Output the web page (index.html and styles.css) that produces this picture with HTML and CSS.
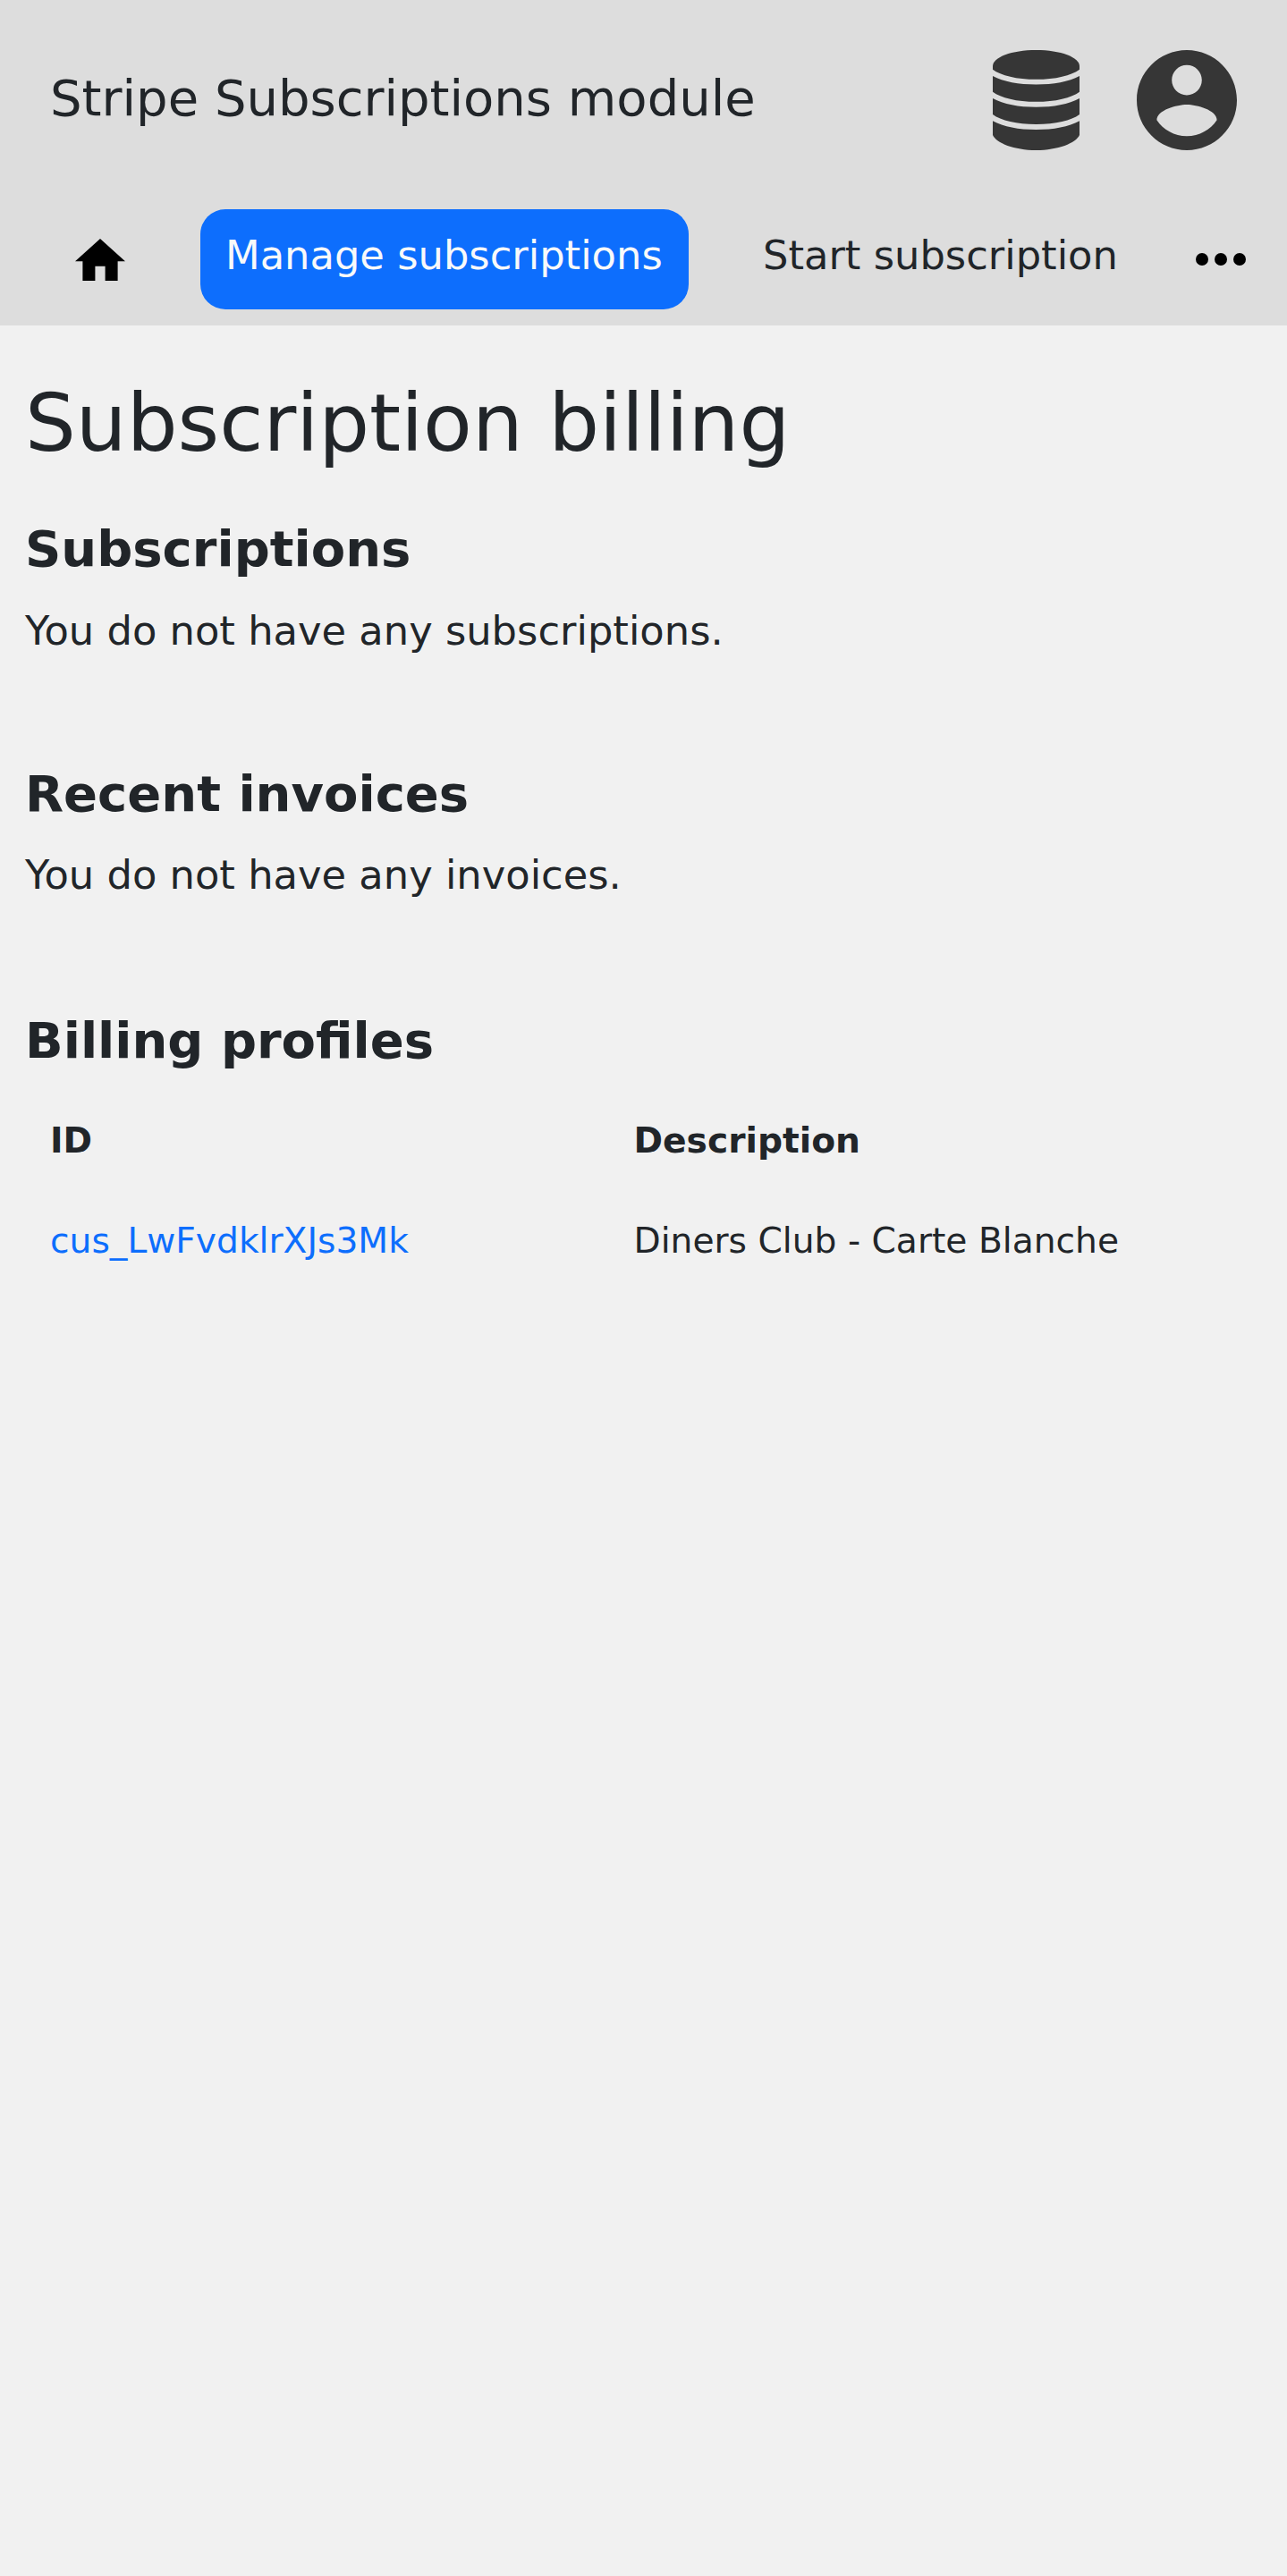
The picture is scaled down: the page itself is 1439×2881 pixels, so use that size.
FILE: index.html
```html
<!DOCTYPE html>
<html lang="en">
<head>
<meta charset="utf-8">
<title>Subscription billing</title>
<link rel="stylesheet" href="styles.css">
</head>
<body>
<header class="header">
  <div class="topbar">
    <div class="brand">Stripe Subscriptions module</div>
    <svg class="icon-database" viewBox="0 0 97 112" aria-hidden="true">
      <path d="M0 18C0 8 21 0 48.500 0S97 8 97 18V21.700C88 28.500 70 32.800 48.500 32.800S9 28.500 0 21.700Z"/>
      <path d="M0 29C12 35.500 29 38.500 48.500 38.500S85 35.500 97 29V46.700C88 53.500 70 57.800 48.500 57.800S9 53.500 0 46.700Z"/>
      <path d="M0 54C12 60.700 29 63.700 48.500 63.700S85 60.700 97 54V72C88 78.800 70 83 48.500 83S9 78.800 0 72Z"/>
      <path d="M0 79.300C12 86 29 89 48.500 89S85 86 97 79.300V95C93 104 73 112 48.500 112S4 104 0 95Z"/>
    </svg>
    <svg class="icon-account" viewBox="2 2 20 20" aria-hidden="true">
      <path d="M12 2C6.480 2 2 6.480 2 12s4.480 10 10 10 10-4.480 10-10S17.520 2 12 2zm0 3c1.660 0 3 1.340 3 3s-1.340 3-3 3-3-1.340-3-3 1.340-3 3-3zm0 14.200c-2.500 0-4.710-1.280-6-3.220.03-1.990 4-3.080 6-3.080 1.990 0 5.970 1.090 6 3.080-1.290 1.940-3.500 3.220-6 3.220z"/>
    </svg>
  </div>
  <nav class="nav">
    <svg class="icon-home" viewBox="2 3 20 17" aria-hidden="true"><path d="M10 20v-6h4v6h5v-8h3L12 3 2 12h3v8z"/></svg>
    <a class="nav-item nav-item-active">Manage subscriptions</a>
    <a class="nav-item">Start subscription</a>
    <svg class="icon-more" viewBox="0 0 16 4" aria-hidden="true"><circle cx="2" cy="2" r="2"/><circle cx="8" cy="2" r="2"/><circle cx="14" cy="2" r="2"/></svg>
  </nav>
</header>
<main class="content">
  <h1 class="page-title">Subscription billing</h1>
  <section class="section">
    <h2 class="section-title">Subscriptions</h2>
    <p class="section-text">You do not have any subscriptions.</p>
  </section>
  <section class="section section-invoices">
    <h2 class="section-title">Recent invoices</h2>
    <p class="section-text">You do not have any invoices.</p>
  </section>
  <section class="section">
    <h2 class="section-title section-title-table">Billing profiles</h2>
    <table class="profiles">
      <thead><tr><th>ID</th><th>Description</th></tr></thead>
      <tbody><tr><td><a class="link">cus_LwFvdklrXJs3Mk</a></td><td>Diners Club - Carte Blanche</td></tr></tbody>
    </table>
  </section>
</main>
</body>
</html>
```
FILE: styles.css
```css
* { box-sizing: border-box; }
body {
  margin: 0;
  min-height: 2881px;
  background: #f1f1f1;
  color: #212529;
  font-family: "DejaVu Sans", sans-serif;
}
.header {
  width: 1438.5px;
  height: 364px;
  background: #ddd;
}
.topbar {
  display: flex;
  align-items: center;
  height: 224px;
  padding: 0 56px;
  fill: #363636;
}
.brand {
  flex: 1;
  font-size: 56px;
  line-height: 112px;
  padding-bottom: 4px;
}
.icon-database { width: 97px; height: 112px; margin-right: 63.700px; }
.icon-account { width: 112px; height: 112px; }
.nav {
  display: flex;
  align-items: center;
  height: 112px;
  margin-top: 10.400px;
  padding-left: 84.300px;
}
.icon-home { width: 56px; height: 47.600px; margin-right: 83.700px; }
.nav-item {
  height: 112px;
  padding: 17.400px 28px 0;
  border-radius: 28px;
  font-size: 44.800px;
  line-height: 67px;
  white-space: nowrap;
}
.nav-item-active {
  width: 546px;
  margin-right: 55px;
  background: #0d6efd;
  color: #f8f9fa;
}
.icon-more { width: 56px; height: 14px; margin-left: 59.500px; }
.content { padding: 55px 28px 0; }
.page-title {
  margin: 0 0 53px;
  font-size: 89.600px;
  font-weight: 400;
  line-height: 108px;
}
.section { margin-bottom: 114px; }
.section-invoices { margin-bottom: 117px; }
.section-title {
  margin: 0 0 23.500px;
  font-size: 56px;
  font-weight: 700;
  line-height: 68px;
}
.section-title-table { margin-bottom: 21px; }
.section-text {
  margin: 0;
  font-size: 44.800px;
  line-height: 68px;
}
.profiles {
  width: 1382.5px;
  border-collapse: collapse;
  table-layout: fixed;
  font-size: 39.200px;
}
.profiles th, .profiles td {
  height: 112px;
  padding: 0 28px;
  text-align: left;
  vertical-align: middle;
  white-space: nowrap;
}
.profiles th:first-child { width: 652.500px; }
.link { color: #0d6efd; }
```
